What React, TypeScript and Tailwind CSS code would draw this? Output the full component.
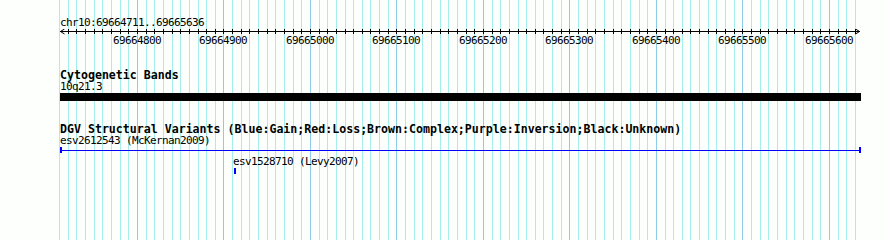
import { useMemo } from 'react';

const START = 69664711;
const END = 69665636;
const LEFT = 60;
const WIDTH = 800;
const PX_PER_BP = WIDTH / (END - START);

const toX = (bp: number) => Math.round(LEFT + (bp - START) * PX_PER_BP);

const MONO = "font-['DejaVu_Sans_Mono','Liberation_Mono',monospace]";
const SMALL = 'text-[11px] tracking-[-0.62px]';
const BOLD = 'text-[11.6px] font-bold leading-[12px] h-[12px]';

function useTicks() {
  return useMemo(() => {
    const minor: number[] = [];
    for (let bp = Math.ceil(START / 10) * 10 - 10; bp <= END; bp += 10) minor.push(bp);
    const major = minor.filter((bp) => bp % 100 === 0);
    return { minor, major };
  }, []);
}

function Grid() {
  const { minor } = useTicks();
  return (
    <svg className="absolute inset-0" width={890} height={240}>
      {minor.map((bp) => (
        <line
          key={bp}
          x1={toX(bp) + 0.5}
          x2={toX(bp) + 0.5}
          y1={0}
          y2={240}
          stroke={bp % 100 === 0 ? '#8ccbea' : '#a6eded'}
          strokeWidth={1}
        />
      ))}
    </svg>
  );
}

function Ruler() {
  const { minor, major } = useTicks();
  return (
    <svg width={890} height={17} className="block">
      <line x1={LEFT} x2={860} y1={2.5} y2={2.5} stroke="#000" />
      <polyline points={`${LEFT + 4.5},0 ${LEFT + 0.5},2.5 ${LEFT + 4.5},5`} fill="none" stroke="#000" />
      <polyline points="855.5,0 859.5,2.5 855.5,5" fill="none" stroke="#000" />
      {minor
        .filter((bp) => bp > START && bp < END)
        .map((bp) => (
          <line key={bp} x1={toX(bp) + 0.5} x2={toX(bp) + 0.5} y1={0} y2={5} stroke="#000" />
        ))}
      {major.map((bp) => (
        <text
          key={bp}
          x={toX(bp)}
          y={15}
          textAnchor="middle"
          fontFamily="'DejaVu Sans Mono', 'Liberation Mono', monospace"
          fontSize={11}
          letterSpacing={-0.62}
          fill="#000"
        >
          {bp}
        </text>
      ))}
    </svg>
  );
}

export default function App() {
  return (
    <div className={`relative w-[890px] h-[240px] overflow-hidden bg-[#fcfffc] text-black ${MONO}`}>
      <Grid />
      <div className="relative flex flex-col">
        <div className={`pl-[60px] pt-[16px] ${SMALL} leading-[13px] h-[29px]`}>
          chr10:69664711..69665636
        </div>
        <div className="h-[17px]">
          <Ruler />
        </div>

        <div className="pl-[60px] mt-[23px]">
          <div className={BOLD}>Cytogenetic Bands</div>
          <div className={`${SMALL} leading-[11px] h-[11px]`}>10q21.3</div>
          <div className="mt-[1px] h-[8px] w-[801px] bg-black" />
        </div>

        <div className="pl-[60px] mt-[22px]">
          <div className={`${BOLD} whitespace-nowrap`}>
            DGV Structural Variants (Blue:Gain;Red:Loss;Brown:Complex;Purple:Inversion;Black:Unknown)
          </div>
          <div className={`${SMALL} leading-[11px] h-[11px] whitespace-nowrap`}>esv2612543 (McKernan2009)</div>
          <div className="mt-[1px] flex items-center h-[6px] w-[801px]">
            <div className="w-[2px] h-[6px] bg-[#0000ff]" />
            <div className="flex-1 h-px bg-[#0000ff]" />
            <div className="w-[2px] h-[6px] bg-[#0000ff]" />
          </div>
          <div className={`ml-[173px] mt-[3px] ${SMALL} leading-[11px] h-[11px] whitespace-nowrap`}>
            esv1528710 (Levy2007)
          </div>
          <div className="ml-[174px] mt-[1px] w-[2px] h-[6px] bg-[#0000ff]" />
        </div>
      </div>
    </div>
  );
}
